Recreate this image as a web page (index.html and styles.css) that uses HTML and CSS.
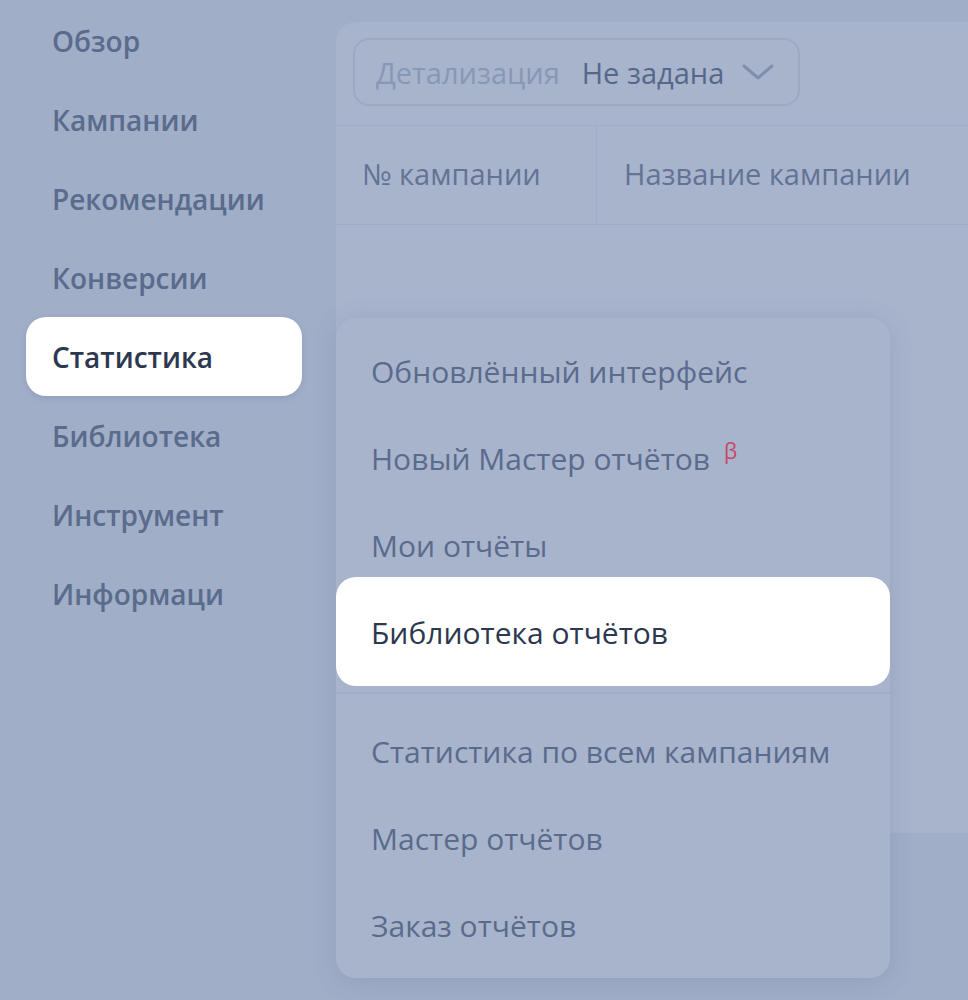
FILE: index.html
```html
<!DOCTYPE html>
<html lang="ru">
<head>
    <meta charset="UTF-8">
    <title>Статистика</title>
    <link rel="stylesheet" href="styles.css">
</head>
<body>

    <div class="layout">
        <!-- Left navigation -->
        <nav class="sidebar">
            <div class="nav-item">Обзор</div>
            <div class="nav-item">Кампании</div>
            <div class="nav-item">Рекомендации</div>
            <div class="nav-item">Конверсии</div>
            <div class="nav-item active">Статистика</div>
            <div class="nav-item">Библиотека</div>
            <div class="nav-item">Инструмент</div>
            <div class="nav-item">Информаци</div>
        </nav>

        <!-- Main card -->
        <main class="card">
            <div class="toolbar">
                <div class="select">
                    <span class="select-label">Детализация</span>
                    <span class="select-value">Не задана</span>
                    <svg class="chevron" width="34" height="18" viewBox="0 0 34 18">
                        <path d="M3 3 L17 15 L31 3" fill="none" stroke="currentColor" stroke-width="3" stroke-linecap="round" stroke-linejoin="round"/>
                    </svg>
                </div>
            </div>
            <div class="table-head">
                <div class="col col-id">№ кампании</div>
                <div class="col col-name">Название кампании</div>
            </div>
        </main>
    </div>

    <!-- Statistics dropdown -->
    <div class="menu">
        <div class="menu-group">
            <div class="menu-item">Обновлённый интерфейс</div>
            <div class="menu-item">Новый Мастер отчётов <sup class="beta">β</sup></div>
            <div class="menu-item">Мои отчёты</div>
            <div class="menu-item selected">Библиотека отчётов</div>
        </div>
        <div class="menu-group second">
            <div class="menu-item">Статистика по всем кампаниям</div>
            <div class="menu-item">Мастер отчётов</div>
            <div class="menu-item">Заказ отчётов</div>
        </div>
    </div>

</body>
</html>
```

FILE: styles.css
```css
body {
    margin: 0;
    padding: 0;
    background-color: #a0aec8;
    font-family: "Open Sans", "Noto Sans", Arial, sans-serif;
    color: #5a6b8c;
    overflow: hidden;
    height: 1000px;
}
.layout {
    display: flex;
    align-items: flex-start;
}
.sidebar {
    width: 336px;
    flex-shrink: 0;
    padding-top: 1px;
}
.nav-item {
    margin-left: 26px;
    width: 276px;
    height: 79px;
    padding-left: 26px;
    box-sizing: border-box;
    display: flex;
    align-items: center;
    font-size: 28px;
    font-weight: 600;
    border-radius: 20px;
}
.nav-item.active {
    background-color: #fff;
    color: #2c3850;
    box-shadow: 0 2px 6px rgba(60, 80, 120, 0.15);
}
.card {
    flex: 1;
    margin-top: 22px;
    margin-right: -40px;
    height: 811px;
    background-color: #a8b4cc;
    border-radius: 20px 0 0 20px;
}
.toolbar {
    padding: 16px 17px;
    height: 103px;
    box-sizing: border-box;
}
.select {
    display: inline-flex;
    align-items: center;
    width: 447px;
    height: 68px;
    box-sizing: border-box;
    padding-left: 21px;
    border: 2px solid #9ba9c4;
    border-radius: 16px;
    font-size: 29px;
}
.select-label {
    color: #8797b6;
}
.select-value {
    margin-left: 22px;
    color: #56688a;
}
.chevron {
    margin-left: 17px;
    color: #7d8eaf;
}
.table-head {
    display: flex;
    height: 98px;
    border-top: 1px solid #9eacc6;
    border-bottom: 1px solid #9eacc6;
    font-size: 29px;
    color: #627395;
}
.col {
    display: flex;
    align-items: center;
    padding-bottom: 3px;
}
.col-id {
    width: 261px;
    box-sizing: border-box;
    padding-left: 26px;
    border-right: 1px solid #9eacc6;
}
.col-name {
    padding-left: 27px;
}

/* dropdown over the page */
.menu {
    position: absolute;
    left: 336px;
    top: 318px;
    width: 554px;
    height: 660px;
    box-sizing: border-box;
    padding: 10px 0 7px;
    background-color: #a8b4cc;
    border-radius: 20px;
    box-shadow: 0 4px 24px rgba(70, 90, 130, 0.18);
}
.menu-item {
    height: 87px;
    padding-left: 35px;
    display: flex;
    align-items: center;
    font-size: 30px;
    color: #5a6b8c;
}
.menu-item.selected {
    height: 109px;
    margin-top: -12px;
    padding-top: 2px;
    box-sizing: border-box;
    background-color: #fff;
    border-radius: 20px;
    color: #2c3850;
}
.menu-group.second {
    margin-top: 6px;
    padding-top: 14px;
    border-top: 2px solid #9eacc6;
}
.beta {
    margin-left: 14px;
    font-size: 21px;
    color: #c8475f;
    align-self: flex-start;
    margin-top: 22px;
}
```
